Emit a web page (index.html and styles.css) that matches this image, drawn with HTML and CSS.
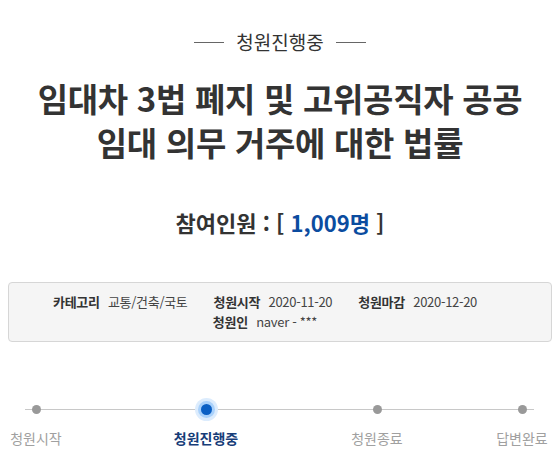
FILE: index.html
```html
<!DOCTYPE html>
<html lang="ko">
<head>
<meta charset="utf-8">
<link rel="stylesheet" href="styles.css">
</head>
<body>
<div class="page">
  <div class="status"><span class="rule"></span><span class="status-text">청원진행중</span><span class="rule"></span></div>
  <h1 class="title">임대차 3법 폐지 및 고위공직자 공공<br>임대 의무 거주에 대한 법률</h1>
  <div class="count">참여인원 : [ <span class="num">1,009명</span> ]</div>
  <div class="info">
    <div class="info-row">
      <span class="item"><b>카테고리</b> 교통/건축/국토</span>
      <span class="item"><b>청원시작</b> 2020-11-20</span>
      <span class="item"><b>청원마감</b> 2020-12-20</span>
    </div>
    <div class="info-row">
      <span class="item"><b>청원인</b> naver - ***</span>
    </div>
  </div>
  <div class="steps">
    <div class="step s1"><span class="dot"></span><span class="label">청원시작</span></div>
    <div class="step s2 active"><span class="dot"></span><span class="label">청원진행중</span></div>
    <div class="step s3"><span class="dot"></span><span class="label">청원종료</span></div>
    <div class="step s4"><span class="dot"></span><span class="label">답변완료</span></div>
  </div>
</div>
</body>
</html>
```
FILE: styles.css
```css
html, body {
  margin: 0;
  padding: 0;
  background: #fff;
}
body {
  font-family: "Noto Sans CJK KR", "Noto Sans", sans-serif;
  color: #333;
}
.page {
  padding: 0 8px;
}
.status {
  display: flex;
  justify-content: center;
  align-items: center;
  gap: 12px;
  padding-top: 29px;
  height: 26px;
}
.rule {
  width: 30px;
  height: 1px;
  background: #666;
}
.status-text {
  font-size: 19px;
  line-height: 26px;
  color: #333;
}
.title {
  margin: 21px 0 0;
  text-align: center;
  font-size: 33px;
  line-height: 44px;
  font-weight: 700;
  color: #333;
  letter-spacing: -0.3px;
}
.count {
  margin-top: 43px;
  text-align: center;
  font-size: 22px;
  line-height: 30px;
  font-weight: 700;
  color: #333;
}
.num {
  color: #0b4c9f;
}
.info {
  margin-top: 45px;
  height: 60px;
  box-sizing: border-box;
  border: 1px solid #d6d6d6;
  border-radius: 4px;
  background: #f5f5f5;
  display: flex;
  flex-direction: column;
  align-items: center;
  padding-top: 9px;
  padding-right: 30px;
}
.info-row {
  display: flex;
  gap: 26px;
  font-size: 13px;
  line-height: 20px;
  color: #444;
  letter-spacing: -0.3px;
}
.info-row b {
  font-weight: 700;
  color: #333;
  margin-right: 5px;
}
.steps {
  position: relative;
  margin-top: 56px;
  display: grid;
  grid-template-columns: 56px 106px 72px 106px 58px 88px 56px;
}
.steps::before {
  content: "";
  position: absolute;
  left: 17px;
  right: 18px;
  top: 11px;
  height: 1px;
  background: #c8c8c8;
}
.step {
  position: relative;
  display: flex;
  flex-direction: column;
  align-items: center;
}
.s1 { grid-column: 1; }
.s2 { grid-column: 3; }
.s3 { grid-column: 5; }
.s4 { grid-column: 7; }
.dot {
  width: 9px;
  height: 9px;
  margin: 7px 0;
  border-radius: 50%;
  background: #999;
}
.active .dot {
  width: 11px;
  height: 11px;
  margin: 6px 0;
  background: #0a5fc4;
  box-shadow: 0 0 0 3px #a9d1fb, 0 0 0 6px #dcecfd;
}
.label {
  margin-top: 7px;
  font-size: 14px;
  line-height: 20px;
  color: #a0a0a0;
  white-space: nowrap;
}
.active .label {
  color: #173d78;
  font-weight: 700;
}
```
